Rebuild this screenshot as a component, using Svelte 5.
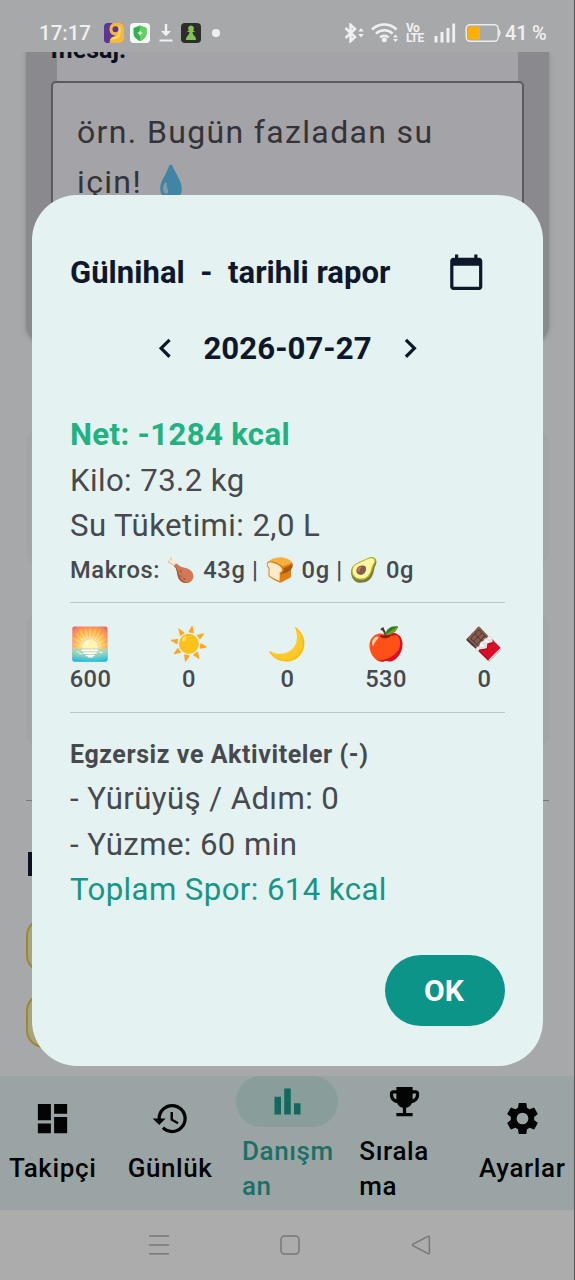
<script>
  const meals = [
    { icon: '🌅', value: 600 },
    { icon: '☀️', value: 0 },
    { icon: '🌙', value: 0 },
    { icon: '🍎', value: 530 },
    { icon: '🍫', value: 0 }
  ];
  const tabs = [
    { label: ['Takipçi'], d: 'M3 13h8V3H3v10zm0 8h8v-6H3v6zm10 0h8V11h-8v10zm0-18v6h8V3h-8z' },
    { label: ['Günlük'], d: 'M13 3a9 9 0 0 0-9 9H1l3.9 3.9.1.1L9 12H6c0-3.87 3.13-7 7-7s7 3.13 7 7-3.13 7-7 7c-1.93 0-3.68-.79-4.94-2.06l-1.42 1.42A8.95 8.95 0 0 0 13 21a9 9 0 0 0 0-18zm-1 5v5l4.28 2.54.72-1.21-3.5-2.08V8H12z' },
    { label: ['Danışm', 'an'], active: true, d: 'M4 9h4v11H4zm12 4h4v7h-4zm-6-9h4v16h-4z' },
    { label: ['Sırala', 'ma'], d: 'M19 5h-2V3H7v2H5c-1.1 0-2 .9-2 2v1c0 2.55 1.92 4.63 4.39 4.94A5.01 5.01 0 0 0 11 15.9V19H7v2h10v-2h-4v-3.1a5.01 5.01 0 0 0 3.61-2.96C19.08 12.63 21 10.55 21 8V7c0-1.1-.9-2-2-2zM5 8V7h2v3.82C5.84 10.4 5 9.3 5 8zm14 0c0 1.3-.84 2.4-2 2.82V7h2v1z' },
    { label: ['Ayarlar'], d: 'M19.14 12.94c.04-.3.06-.61.06-.94s-.02-.64-.07-.94l2.03-1.58a.49.49 0 0 0 .12-.61l-1.92-3.32a.49.49 0 0 0-.59-.22l-2.39.96c-.5-.38-1.03-.7-1.62-.94l-.36-2.54a.48.48 0 0 0-.48-.41h-3.84c-.24 0-.43.17-.47.41l-.36 2.54c-.59.24-1.13.57-1.62.94l-2.39-.96a.49.49 0 0 0-.59.22L2.74 8.87c-.12.21-.08.47.12.61l2.03 1.58c-.05.3-.09.63-.09.94s.02.64.07.94l-2.03 1.58a.49.49 0 0 0-.12.61l1.92 3.32c.12.22.37.29.59.22l2.39-.96c.5.38 1.03.7 1.62.94l.36 2.54c.05.24.24.41.48.41h3.84c.24 0 .44-.17.47-.41l.36-2.54c.59-.24 1.13-.56 1.62-.94l2.39.96c.22.08.47 0 .59-.22l1.92-3.32a.49.49 0 0 0-.12-.61l-2.01-1.58zM12 15.6A3.6 3.6 0 1 1 12 8.4a3.6 3.6 0 0 1 0 7.2z' }
  ];
</script>

<div class="screen">
  <header class="status">
    <span class="time">17:17</span>
    <svg class="s-app" width="20" height="20" viewBox="0 0 20 20">
      <rect width="20" height="20" rx="4" fill="#593798" />
      <path d="M9 0h7a4 4 0 0 1 4 4v12a4 4 0 0 1-4 4H5.500l.5-4 6-4C8 13 5.500 10 5.500 6c0-3 1.500-5 3.500-6z" fill="#f3b83c" />
      <path d="M15.500 3.500v6c0 4-3 6-8 6" fill="none" stroke="#fbd45c" stroke-width="2.400" />
      <path d="M11.500 3.300a3 3 0 1 1-.1 6 3 3 0 0 1 .1-6zM0 14l6 1-1 5H4a4 4 0 0 1-4-4z" fill="#593798" />
    </svg>
    <svg class="s-shield" width="20" height="20" viewBox="0 0 20 20">
      <rect width="20" height="20" rx="4" fill="#f4faf5" />
      <path d="M10 2.500 16.500 5v5c0 4-3 6.500-6.500 8-3.500-1.500-6.500-4-6.500-8V5z" fill="#36ae52" />
      <path d="M10 2.500 16.500 5v5c0 4-3 6.500-6.500 8z" fill="#64cd63" />
      <path d="m10 7 .9 2.200 2.100.8-2.100.9L10 13l-.9-2.100L7 10l2.100-.8z" fill="#d7ffc7" />
    </svg>
    <svg class="s-down" width="14" height="18" viewBox="0 0 14 18">
      <path d="M5.800 0h2.400v7H12l-5 5.300L2 7h3.800zM.5 15.500h13v1.900H.5z" fill="#f0f0f0" />
    </svg>
    <svg class="s-pawn" width="20" height="20" viewBox="0 0 20 20">
      <rect width="20" height="20" rx="4" fill="#2e2d2b" />
      <path d="M10 2.500a2.900 2.900 0 0 1 2 5l1.500.5v1h-2c.2 2 1 3 2.200 4.300 1 1 1.300 2 1.300 3.700H5c0-1.700.3-2.700 1.300-3.700C7.500 12 8.300 11 8.500 9h-2V8L8 7.500a2.900 2.900 0 0 1 2-5z" fill="#83c255" />
    </svg>
    <i class="dot"></i>
    <span class="spacer"></span>
    <svg class="s-bt" width="21" height="20" viewBox="0 0 21 20">
      <path d="m1.500 5 9.500 9-4.500 4.200V1.800L11 6l-9.500 9" fill="none" stroke="#f0f0f0" stroke-width="2.500" />
      <path d="m17 5 2.800 3.500h-5.600zM14.200 11h5.600L17 14.500z" fill="#f0f0f0" />
    </svg>
    <svg class="s-wifi" width="28" height="20" viewBox="0 0 28 20">
      <g fill="none" stroke="#f0f0f0" stroke-width="2.500">
        <path d="M1 6.500a17.500 17.500 0 0 1 24.600 0" />
        <path d="M5 10.600a12 12 0 0 1 16.600 0" />
        <path d="M9 14.400a6.500 6.500 0 0 1 8.600 0" />
      </g>
      <circle cx="13.300" cy="16.800" r="2.500" fill="#f0f0f0" />
      <path d="m24.500 11.500 2.500 3h-5zM22 16h5l-2.500 3z" fill="#f0f0f0" />
    </svg>
    <span class="volte"><b>Vo</b><b>LTE</b></span>
    <svg class="s-signal" width="22" height="20" viewBox="0 0 22 20">
      <path d="M.5 13h3v6.500h-3zM6.500 9h3v10.500h-3zM12.500 5h3v14.500h-3zM18.300.5h2.800v19h-2.800z" fill="#f0f0f0" />
    </svg>
    <svg class="s-batt" width="37" height="20" viewBox="0 0 37 20">
      <rect x="1.200" y="1.700" width="32" height="16.600" rx="4" fill="none" stroke="#ececec" stroke-width="1.500" />
      <path d="M4.500 3.500h10.500v13H4.500a1.500 1.500 0 0 1-1.500-1.500V5a1.500 1.500 0 0 1 1.500-1.500z" fill="#ffaf05" />
      <path d="M34 6.500c2 1 2 6 0 7z" fill="#ececec" />
    </svg>
    <span class="pct">41 %</span>
  </header>

  <main class="page">
    <section class="compose">
      <div class="inner">
        <p class="label">mesaj:</p>
      </div>
      <div class="field">örn. Bugün fazladan su<br />için! <span class="drop">💧</span></div>
    </section>
    <div class="ghost first"></div>
    <div class="ghost"></div>
    <hr class="rule" />
    <i class="heading"></i>
    <div class="chip"></div>
    <div class="chip"></div>
  </main>

  <nav class="tabs">
    {#each tabs as t}
      <div class="tab" class:active={t.active} class:wrapped={t.label.length > 1}>
        <span class="pill"><svg width="39" height="39" viewBox="0 0 24 24"><path d={t.d} fill="currentColor" /></svg></span>
        <span class="name">{#each t.label as line}<span>{line}</span>{/each}</span>
      </div>
    {/each}
  </nav>

  <footer class="sys">
    <svg width="20" height="20" viewBox="0 0 20 20"><path d="M0 1h20M0 10h20M0 18.700h20" /></svg>
    <svg width="20" height="20" viewBox="0 0 20 20"><rect x="1" y="1" width="18" height="18" rx="3.500" /></svg>
    <svg width="20" height="20" viewBox="0 0 20 20"><path d="M17 1.300 2 9.200q-1 .7 0 1.400l15 8q1.400.5 1.400-1V2.300q0-1.500-1.400-1z" /></svg>
  </footer>

  <div class="dialog">
    <div class="title">
      <h1>Gülnihal&nbsp; -&nbsp; tarihli rapor</h1>
      <svg width="38.500" height="38.500" viewBox="0 0 24 24"><path d="M20 3h-1V1h-2v2H7V1H5v2H4c-1.100 0-2 .9-2 2v16c0 1.100.9 2 2 2h16c1.100 0 2-.9 2-2V5c0-1.100-.9-2-2-2zm0 18H4V8h16v13z" fill="#0f172a" /></svg>
    </div>
    <div class="date">
      <svg width="38.500" height="38.500" viewBox="0 0 24 24"><path d="M15.410 7.410 14 6l-6 6 6 6 1.410-1.410L10.830 12z" fill="#0f172a" /></svg>
      <strong>2026-07-27</strong>
      <svg width="38.500" height="38.500" viewBox="0 0 24 24"><path d="M8.590 16.590 10 18l6-6-6-6-1.410 1.410L13.170 12z" fill="#0f172a" /></svg>
    </div>
    <div class="net">Net: -1284 kcal</div>
    <div class="line">Kilo: 73.2 kg</div>
    <div class="line">Su Tüketimi: 2,0 L</div>
    <div class="macros">Makros: 🍗 43g | 🍞 0g | 🥑 0g</div>
    <div class="meals">
      {#each meals as m}
        <div class="meal"><span class="emoji">{m.icon}</span><span class="num">{m.value}</span></div>
      {/each}
    </div>
    <div class="sub">Egzersiz ve Aktiviteler (-)</div>
    <div class="line">- Yürüyüş / Adım: 0</div>
    <div class="line">- Yüzme: 60 min</div>
    <div class="line total">Toplam Spor: 614 kcal</div>
    <button class="ok">OK</button>
  </div>
  <i class="edge"></i>
</div>

<style>
  :global(body) { margin: 0; }
  .screen {
    position: relative;
    width: 575px;
    height: 1280px;
    display: flex;
    flex-direction: column;
    overflow: hidden;
    background: #a7a8aa;
    font-family: Roboto, "Noto Color Emoji", sans-serif;
    color: #48494d;
    box-sizing: border-box;
  }
  .screen * { box-sizing: border-box; }
  svg { display: block; flex: none; }
  .status {
    height: 52px;
    flex: none;
    display: flex;
    align-items: center;
    padding: 14px 29px 0 39px;
    color: #f0f0f0;
    font-size: 20.500px;
    font-weight: 500;
  }
  .time { width: 53px; letter-spacing: 0; }
  .s-app { margin-left: 12px; }
  .s-shield { margin-left: 6px; }
  .s-down { margin-left: 9px; }
  .s-pawn { margin-left: 8px; }
  .dot { width: 8px; height: 8px; border-radius: 50%; background: #f0f0f0; margin-left: 11px; }
  .spacer { flex: 1; }
  .s-wifi { margin-left: 6px; }
  .volte { width: 19px; margin-left: 7px; display: flex; flex-direction: column; font-size: 12px; line-height: 10px; letter-spacing: -.6px; }
  .volte b { font-weight: 700; }
  .s-signal { margin-left: 9px; }
  .s-batt { margin-left: 9px; }
  .pct { margin-left: 3px; width: 41px; font-size: 20px; letter-spacing: -.2px; white-space: nowrap; }

  .page { flex: 1; min-height: 0; padding: 0 26px; overflow: hidden; }
  .compose {
    height: 291px;
    padding: 0 25px;
    background: #8a898e;
    border-radius: 0 0 18px 18px;
    box-shadow: 0 1px 5px #8a898e;
  }
  .inner { height: 291px; margin: 0 6px; background: #a4a3a8; }
  .label { margin: 0 0 0 -6px; height: 30px; font-size: 25px; font-weight: 700; line-height: 30px; position: relative; top: -17px; color: #0b1020; }
  .field {
    margin-top: -262px;
    height: 200px;
    border: 2px solid #5b5a60;
    border-radius: 5px;
    background: #a4a3a8;
    padding: 24px 24px;
    font-size: 32px;
    line-height: 50px;
    letter-spacing: 1.350px;
    color: #343338;
    white-space: nowrap;
  }
  .drop { filter: brightness(.7) saturate(.85); }
  .ghost { height: 141px; margin-top: 42px; border-radius: 18px; background: #a3a4a6; }
  .ghost.first { margin-top: 84px; }
  .rule { height: 1px; border: 0; background: #77787b; margin: 49px 0 0; }
  .heading { display: block; width: 20px; height: 24px; margin: 51px 0 0 2px; background: #0d1122; }
  .chip { width: 170px; height: 55px; margin-top: 42px; border: 2px solid #9b8a2c; border-radius: 18px; background: #a9a480; }
  .chip + .chip { margin-top: 20px; }

  .tabs { height: 134px; flex: none; display: grid; grid-template-columns: repeat(5, 117.400px); margin-right: -12px; margin-left: -6px; background: #9aa4a4; }
  .tab { display: flex; flex-direction: column; align-items: center; padding-top: 17px; color: #030404; }
  .tab.wrapped { padding-top: 0; }
  .pill { width: 102px; height: 51px; border-radius: 26px; display: grid; place-items: center; }
  .active .pill { background: #899e9b; color: #11685d; }
  .tab.active { color: #1d7065; }
  .name { display: flex; flex-direction: column; margin-top: 7px; font-size: 26px; font-weight: 500; line-height: 35px; letter-spacing: .6px; }
  .wrapped .name { width: 91px; }

  .sys { height: 70px; flex: none; display: flex; gap: 111px; padding: 25px 0 0 149px; background: #acacac; }
  .sys svg { fill: none; stroke: #77787a; stroke-width: 1.500; }

  .dialog {
    position: absolute;
    left: 32px;
    top: 195px;
    width: 511px;
    height: 871px;
    padding: 58px 38px 0;
    border-radius: 45px;
    background: #e4f2f2;
    display: flex;
    flex-direction: column;
  }
  .title { display: flex; justify-content: space-between; align-items: center; height: 39px; padding-right: 20px; color: #0f172a; }
  h1 { margin: 0; font-size: 31px; font-weight: 700; letter-spacing: .04px; white-space: nowrap; }
  .date { display: flex; justify-content: center; align-items: center; height: 39px; margin-top: 37px; gap: 19px; color: #0f172a; }
  .date strong { font-size: 31.200px; font-weight: 700; letter-spacing: .05px; white-space: nowrap; }
  .net { margin-top: 44px; height: 45.500px; line-height: 45.500px; font-size: 31.200px; font-weight: 700; letter-spacing: .33px; color: #22b281; }
  .line { height: 45.500px; line-height: 45.500px; font-size: 31.200px; letter-spacing: .4px; white-space: nowrap; }
  .macros { height: 53.500px; line-height: 42px; font-size: 23.700px; font-weight: 500; letter-spacing: .62px; white-space: nowrap; }
  .meals { height: 111px; border-top: 1px solid #bcc4c7; border-bottom: 1px solid #bcc4c7; display: flex; justify-content: space-between; padding-top: 22px; }
  .meal { display: flex; flex-direction: column; align-items: center; width: 41px; }
  .emoji { font-size: 32px; line-height: 38px; height: 38px; white-space: nowrap; }
  .num { font-size: 23.700px; line-height: 32px; font-weight: 500; letter-spacing: .4px; }
  .sub { margin-top: 23px; height: 40px; line-height: 38px; font-size: 25px; font-weight: 700; letter-spacing: .57px; white-space: nowrap; }
  .total { color: #199587; }
  .ok { align-self: flex-end; margin-top: 42px; width: 120px; height: 71px; border: 0; border-radius: 36px; padding: 0 2px 0 0; background: #0d9488; color: #fff; font: 700 30px Roboto, sans-serif; }
  .edge { position: absolute; right: 0; top: 0; width: 1px; height: 100%; background: #555659; }
</style>
